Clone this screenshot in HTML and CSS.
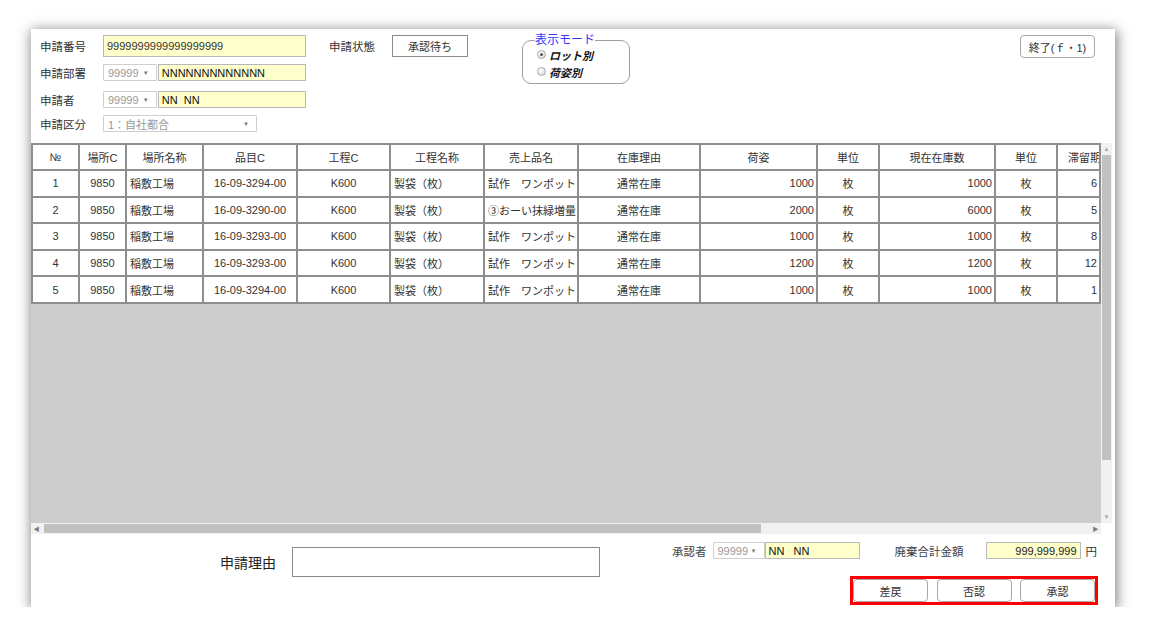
FILE: index.html
```html
<!DOCTYPE html>
<html lang="ja">
<head>
<meta charset="utf-8">
<title>申請</title>
<link rel="stylesheet" href="styles.css">
</head>
<body>
<div class="page">
  <div class="panel">
    <div class="top">
      <div class="form">
        <div class="frow r1"><span class="lbl">申請番号</span><span class="inp yellow w203">9999999999999999999</span></div>
        <div class="frow r2"><span class="lbl">申請部署</span><span class="sel w54">99999<i class="arr">▼</i></span><span class="inp yellow w149 dark">NNNNNNNNNNNNN</span></div>
        <div class="frow r3"><span class="lbl">申請者</span><span class="sel w54">99999<i class="arr">▼</i></span><span class="inp yellow w149 dark">NN&nbsp;&nbsp;NN</span></div>
        <div class="frow r4"><span class="lbl">申請区分</span><span class="sel w154">1：自社都合<i class="arr">▼</i></span></div>
      </div>
      <div class="status"><span class="lbl">申請状態</span><span class="statbox">承認待ち</span></div>
      <fieldset class="mode">
        <legend>表示モード</legend>
        <label class="radio"><span class="dot on"></span>ロット別</label>
        <label class="radio"><span class="dot"></span>荷姿別</label>
      </fieldset>
      <button class="exit">終了(ｆ・1)</button>
    </div>

    <div class="grid">
      <div class="viewport">
        <table class="tbl">
          <colgroup>
            <col class="c47"><col class="c47"><col class="c77"><col class="c94"><col class="c93"><col class="c94"><col class="c94"><col class="c122"><col class="c117"><col class="c62"><col class="c116"><col class="c62"><col class="c43">
          </colgroup>
          <thead>
            <tr><th>№</th><th>場所C</th><th>場所名称</th><th>品目C</th><th>工程C</th><th>工程名称</th><th>売上品名</th><th>在庫理由</th><th>荷姿</th><th>単位</th><th>現在在庫数</th><th>単位</th><th class="clip">滞留期間</th></tr>
          </thead>
          <tbody>
            <tr><td class="c">1</td><td class="c">9850</td><td class="l">稲敷工場</td><td class="c">16-09-3294-00</td><td class="c">K600</td><td class="l">製袋（枚）</td><td class="l">試作　ワンポット</td><td class="c">通常在庫</td><td class="r">1000</td><td class="c">枚</td><td class="r">1000</td><td class="c">枚</td><td class="r">6</td></tr>
            <tr><td class="c">2</td><td class="c">9850</td><td class="l">稲敷工場</td><td class="c">16-09-3290-00</td><td class="c">K600</td><td class="l">製袋（枚）</td><td class="l">③おーい抹緑増量</td><td class="c">通常在庫</td><td class="r">2000</td><td class="c">枚</td><td class="r">6000</td><td class="c">枚</td><td class="r">5</td></tr>
            <tr><td class="c">3</td><td class="c">9850</td><td class="l">稲敷工場</td><td class="c">16-09-3293-00</td><td class="c">K600</td><td class="l">製袋（枚）</td><td class="l">試作　ワンポット</td><td class="c">通常在庫</td><td class="r">1000</td><td class="c">枚</td><td class="r">1000</td><td class="c">枚</td><td class="r">8</td></tr>
            <tr><td class="c">4</td><td class="c">9850</td><td class="l">稲敷工場</td><td class="c">16-09-3293-00</td><td class="c">K600</td><td class="l">製袋（枚）</td><td class="l">試作　ワンポット</td><td class="c">通常在庫</td><td class="r">1200</td><td class="c">枚</td><td class="r">1200</td><td class="c">枚</td><td class="r">12</td></tr>
            <tr><td class="c">5</td><td class="c">9850</td><td class="l">稲敷工場</td><td class="c">16-09-3294-00</td><td class="c">K600</td><td class="l">製袋（枚）</td><td class="l">試作　ワンポット</td><td class="c">通常在庫</td><td class="r">1000</td><td class="c">枚</td><td class="r">1000</td><td class="c">枚</td><td class="r">1</td></tr>
          </tbody>
        </table>
      </div>
      <div class="vbar">
        <span class="sarrow">▲</span>
        <span class="vthumb"></span>
        <span class="vspace"></span>
        <span class="sarrow">▼</span>
      </div>
      <div class="hbar">
        <span class="sarrow">◀</span>
        <span class="hthumb"></span>
        <span class="hspace"></span>
        <span class="sarrow">▶</span>
      </div>
      <div class="corner"></div>
    </div>

    <div class="bottom">
      <div class="reason">
        <span class="rlbl">申請理由</span>
        <span class="rbox"></span>
      </div>
      <div class="right">
        <div class="arow">
          <span class="albl">承認者</span>
          <span class="sel w52">99999<i class="arr">▼</i></span>
          <span class="inp yellow w95 dark">NN&nbsp;&nbsp;&nbsp;NN</span>
          <span class="albl tot">廃棄合計金額</span>
          <span class="inp yellow w95 num">999,999,999</span>
          <span class="yen">円</span>
        </div>
        <div class="actions">
          <button class="abtn">差戻</button>
          <button class="abtn">否認</button>
          <button class="abtn">承認</button>
        </div>
      </div>
    </div>
  </div>
</div>
</body>
</html>
```

FILE: styles.css
```css
html, body {
  margin: 0;
  padding: 0;
  background: #ffffff;
}
body {
  font-family: "Liberation Sans", "Noto Sans CJK JP", sans-serif;
  color: #333333;
  font-size: 11px;
}
.page {
  padding: 29px 0 0 31px;
}
.panel {
  width: 1084px;
  height: 578px;
  background: #ffffff;
  box-shadow: 1px 2px 12px 1px rgba(0, 0, 0, 0.5);
  display: flex;
  flex-direction: column;
}

/* ---------- top ---------- */
.top {
  height: 114px;
  box-sizing: border-box;
  padding: 6px 0 0 9px;
  display: flex;
  align-items: flex-start;
}
.form {
  width: 266px;
}
.frow {
  display: flex;
  align-items: stretch;
}
.r1 { height: 22px; }
.r2 { height: 17px; margin-top: 7px; }
.r3 { height: 17px; margin-top: 10px; }
.r4 { height: 17px; margin-top: 7px; }
.lbl {
  width: 63px;
  flex: none;
  font-size: 11.5px;
  color: #333;
  display: flex;
  align-items: center;
}
.inp {
  box-sizing: border-box;
  height: 100%;
  border: 1px solid #b8b8b8;
  display: flex;
  align-items: center;
  padding-left: 3px;
  font-size: 11px;
  white-space: nowrap;
  overflow: hidden;
}
.yellow { background: #ffffcc; }
.dark { color: #111; }
.w203 { width: 203px; }
.w149 { width: 149px; margin-left: 1px; }
.w95 { width: 95px; }
.sel {
  box-sizing: border-box;
  height: 100%;
  border: 1px solid #cfcfcf;
  border-radius: 1px;
  background: #fff;
  color: #999;
  font-size: 11px;
  display: flex;
  align-items: center;
  padding-left: 4px;
}
.w54 { width: 54px; }
.w52 { width: 52px; }
.w154 { width: 154px; }
.arr {
  font-style: normal;
  font-size: 6px;
  color: #777;
  margin-left: auto;
  margin-right: 7px;
}
.status {
  margin-left: 23px;
  display: flex;
  height: 22px;
}
.statbox {
  box-sizing: border-box;
  width: 76px;
  height: 22px;
  border: 1px solid #8c8c8c;
  display: flex;
  align-items: center;
  justify-content: center;
  font-size: 11px;
  color: #333;
}
.mode {
  margin: 0 0 0 54px;
  box-sizing: border-box;
  width: 108px;
  padding: 0 6px 3px 12px;
  border: 1px solid #a0a0a0;
  border-radius: 9px;
  min-width: 0;
}
.mode legend {
  padding: 0;
  margin-left: 0;
  font-size: 12px;
  line-height: 11px;
  color: #3535ff;
}
.radio {
  display: flex;
  align-items: center;
  height: 17px;
  margin-left: 2px;
  font-size: 11px;
  font-style: italic;
  font-weight: bold;
  color: #111;
}
.dot {
  box-sizing: border-box;
  width: 9px;
  height: 9px;
  border-radius: 50%;
  border: 1px solid #a9a9a9;
  background: radial-gradient(circle at 40% 35%, #ffffff, #d4d4d4);
  margin-right: 3px;
  display: flex;
  align-items: center;
  justify-content: center;
}
.dot.on::after {
  content: "";
  width: 3px;
  height: 3px;
  border-radius: 50%;
  background: #555;
}
.exit {
  margin: 0 20px 0 auto;
  box-sizing: border-box;
  width: 75px;
  height: 23px;
  border: 1px solid #a8a8a8;
  border-radius: 4px;
  background: #fff;
  font-family: inherit;
  font-size: 11px;
  color: #333;
  padding: 0;
}

/* ---------- grid ---------- */
.grid {
  width: 1081px;
  display: grid;
  grid-template-columns: 1070px 11px;
  grid-template-rows: 380px 11px;
}
.viewport {
  overflow: hidden;
  background: #cdcdcd;
}
.tbl {
  table-layout: fixed;
  border-collapse: collapse;
  width: 1068px;
  background: #fff;
}
.c47 { width: 47px; }
.c77 { width: 77px; }
.c94 { width: 94px; }
.c93 { width: 93px; }
.c122 { width: 122px; }
.c117 { width: 117px; }
.c62 { width: 62px; }
.c116 { width: 116px; }
.c43 { width: 43px; }
.tbl th,
.tbl td {
  border: 2px solid #8e8e8e;
  font-size: 11px;
  font-weight: normal;
  color: #333;
  white-space: nowrap;
  overflow: hidden;
  padding: 0 3px;
}
.tbl thead tr { height: 26px; }
.tbl tbody tr { height: 26.6px; }
.tbl th { text-align: center; }
.tbl th.clip { text-align: left; padding-left: 10px; text-overflow: clip; }
.tbl td.c { text-align: center; }
.tbl td.l { text-align: left; }
.tbl td.r { text-align: right; padding-right: 2px; }
.vbar {
  background: #f1f1f1;
  display: flex;
  flex-direction: column;
  align-items: center;
}
.vthumb {
  width: 9px;
  height: 305px;
  background: #c1c1c1;
}
.vspace { flex: 1; }
.sarrow {
  font-size: 6px;
  color: #a3a3a3;
  height: 12px;
  width: 11px;
  display: flex;
  align-items: center;
  justify-content: center;
  flex: none;
}
.hbar {
  background: #f1f1f1;
  display: flex;
  align-items: center;
}
.hbar .sarrow { color: #7a7a7a; }
.hthumb {
  width: 717px;
  height: 9px;
  background: #c1c1c1;
  margin-left: 2px;
}
.hspace { flex: 1; }
.corner { background: #ffffff; }

/* ---------- bottom ---------- */
.bottom {
  flex: 1;
  display: flex;
  align-items: flex-start;
}
.reason {
  margin: 13px 0 0 189px;
  display: flex;
  align-items: center;
}
.rlbl {
  width: 72px;
  font-size: 14px;
  color: #222;
}
.rbox {
  box-sizing: border-box;
  width: 308px;
  height: 30px;
  border: 1px solid #8a8a8a;
}
.right {
  margin: 8px 17px 0 auto;
  width: 426px;
  display: flex;
  flex-direction: column;
  align-items: flex-end;
}
.arow {
  width: 100%;
  height: 17px;
  display: flex;
  align-items: stretch;
}
.albl {
  font-size: 11.5px;
  color: #444;
  display: flex;
  align-items: center;
  margin-right: 6px;
}
.albl.tot {
  margin-left: 35px;
  margin-right: 22px;
}
.num {
  justify-content: flex-end;
  padding-right: 3px;
  color: #222;
}
.yen {
  margin-left: 5px;
  display: flex;
  align-items: center;
  font-size: 11.5px;
  color: #333;
}
.actions {
  margin-top: 17px;
  box-sizing: border-box;
  width: 248px;
  height: 29px;
  border: 3px solid #ff0000;
  display: flex;
  justify-content: space-between;
}
.abtn {
  box-sizing: border-box;
  width: 75px;
  height: 23px;
  border: 1px solid #a8a8a8;
  border-radius: 4px;
  background: #fff;
  font-family: inherit;
  font-size: 11px;
  color: #333;
  padding: 0;
}
```
